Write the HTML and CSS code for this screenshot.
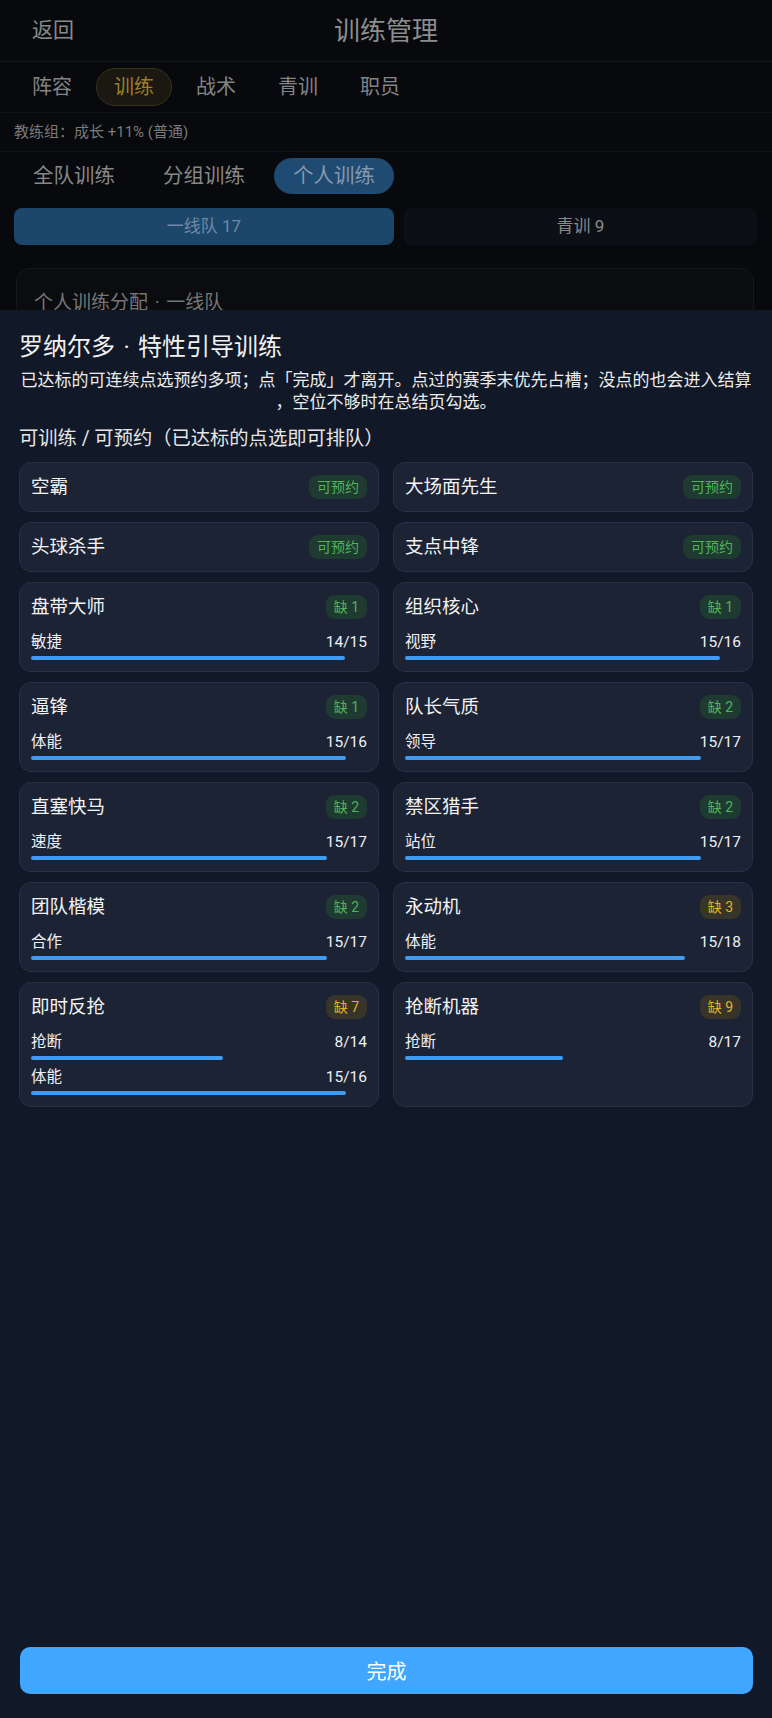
FILE: index.html
```html
<!DOCTYPE html>
<html lang="zh">
<head>
<meta charset="utf-8">
<title>训练管理</title>
<link rel="stylesheet" href="styles.css">
</head>
<body>
<div class="app">
  <header class="topbar">
    <span class="back">返回</span>
    <h1 class="title">训练管理</h1>
  </header>
  <nav class="tabs">
    <span class="tab">阵容</span>
    <span class="tab active">训练</span>
    <span class="tab">战术</span>
    <span class="tab">青训</span>
    <span class="tab">职员</span>
  </nav>
  <div class="coach">教练组：成长 +11% (普通)</div>
  <div class="modes">
    <span class="mode">全队训练</span>
    <span class="mode">分组训练</span>
    <span class="mode active">个人训练</span>
  </div>
  <div class="seg">
    <span class="seg-btn active">一线队 17</span>
    <span class="seg-btn">青训 9</span>
  </div>
  <section class="assign">
    <div class="assign-title">个人训练分配<span class="sep">·</span>一线队</div>
  </section>

  <div class="sheet">
    <h2 class="sheet-title">罗纳尔多<span class="sep">·</span>特性引导训练</h2>
    <p class="sheet-desc">已达标的可连续点选预约多项；点「完成」才离开。点过的赛季末优先占槽；没点的也会进入结算，空位不够时在总结页勾选。</p>
    <div class="section-label">可训练 / 可预约（已达标的点选即可排队）</div>
    <div class="grid">
      <div class="card"><div class="card-head"><span class="name">空霸</span><span class="badge ok">可预约</span></div></div>
      <div class="card"><div class="card-head"><span class="name">大场面先生</span><span class="badge ok">可预约</span></div></div>
      <div class="card"><div class="card-head"><span class="name">头球杀手</span><span class="badge ok">可预约</span></div></div>
      <div class="card"><div class="card-head"><span class="name">支点中锋</span><span class="badge ok">可预约</span></div></div>

      <div class="card">
        <div class="card-head"><span class="name">盘带大师</span><span class="badge ok">缺 1</span></div>
        <div class="attrs">
          <div class="attr"><div class="attr-row"><span>敏捷</span><span>14/15</span></div><div class="bar"><div class="fill" style="width:93.33%"></div></div></div>
        </div>
      </div>
      <div class="card">
        <div class="card-head"><span class="name">组织核心</span><span class="badge ok">缺 1</span></div>
        <div class="attrs">
          <div class="attr"><div class="attr-row"><span>视野</span><span>15/16</span></div><div class="bar"><div class="fill" style="width:93.75%"></div></div></div>
        </div>
      </div>

      <div class="card">
        <div class="card-head"><span class="name">逼锋</span><span class="badge ok">缺 1</span></div>
        <div class="attrs">
          <div class="attr"><div class="attr-row"><span>体能</span><span>15/16</span></div><div class="bar"><div class="fill" style="width:93.75%"></div></div></div>
        </div>
      </div>
      <div class="card">
        <div class="card-head"><span class="name">队长气质</span><span class="badge ok">缺 2</span></div>
        <div class="attrs">
          <div class="attr"><div class="attr-row"><span>领导</span><span>15/17</span></div><div class="bar"><div class="fill" style="width:88.24%"></div></div></div>
        </div>
      </div>

      <div class="card">
        <div class="card-head"><span class="name">直塞快马</span><span class="badge ok">缺 2</span></div>
        <div class="attrs">
          <div class="attr"><div class="attr-row"><span>速度</span><span>15/17</span></div><div class="bar"><div class="fill" style="width:88.24%"></div></div></div>
        </div>
      </div>
      <div class="card">
        <div class="card-head"><span class="name">禁区猎手</span><span class="badge ok">缺 2</span></div>
        <div class="attrs">
          <div class="attr"><div class="attr-row"><span>站位</span><span>15/17</span></div><div class="bar"><div class="fill" style="width:88.24%"></div></div></div>
        </div>
      </div>

      <div class="card">
        <div class="card-head"><span class="name">团队楷模</span><span class="badge ok">缺 2</span></div>
        <div class="attrs">
          <div class="attr"><div class="attr-row"><span>合作</span><span>15/17</span></div><div class="bar"><div class="fill" style="width:88.24%"></div></div></div>
        </div>
      </div>
      <div class="card">
        <div class="card-head"><span class="name">永动机</span><span class="badge warn">缺 3</span></div>
        <div class="attrs">
          <div class="attr"><div class="attr-row"><span>体能</span><span>15/18</span></div><div class="bar"><div class="fill" style="width:83.33%"></div></div></div>
        </div>
      </div>

      <div class="card">
        <div class="card-head"><span class="name">即时反抢</span><span class="badge warn">缺 7</span></div>
        <div class="attrs">
          <div class="attr"><div class="attr-row"><span>抢断</span><span>8/14</span></div><div class="bar"><div class="fill" style="width:57.14%"></div></div></div>
          <div class="attr"><div class="attr-row"><span>体能</span><span>15/16</span></div><div class="bar"><div class="fill" style="width:93.75%"></div></div></div>
        </div>
      </div>
      <div class="card">
        <div class="card-head"><span class="name">抢断机器</span><span class="badge warn">缺 9</span></div>
        <div class="attrs">
          <div class="attr"><div class="attr-row"><span>抢断</span><span>8/17</span></div><div class="bar"><div class="fill" style="width:47.06%"></div></div></div>
        </div>
      </div>
    </div>
    <button class="done">完成</button>
  </div>
</div>
</body>
</html>
```

FILE: styles.css
```css
* { box-sizing: border-box; }
html, body {
  margin: 0;
  padding: 0;
  background: #07090d;
  font-family: Roboto, "Noto Sans CJK SC", sans-serif;
}
.app {
  position: relative;
  width: 772px;
  height: 1718px;
  overflow: hidden;
  background: #07090d;
}
.topbar {
  height: 62px;
  border-bottom: 1px solid #13161c;
  display: flex;
  align-items: center;
  justify-content: center;
  position: relative;
}
.back {
  position: absolute;
  left: 32px;
  top: 14px;
  font-size: 21px;
  line-height: 32px;
  color: #8a8a8a;
}
.title {
  margin: 0;
  font-size: 26px;
  font-weight: 400;
  color: #8d8d8d;
  line-height: 34px;
}
.tabs {
  height: 51px;
  display: flex;
  align-items: center;
  gap: 6px;
  padding-left: 14px;
  border-bottom: 1px solid #101318;
}
.tab {
  padding: 0 17px;
  height: 38px;
  line-height: 36px;
  font-size: 20px;
  color: #848484;
  border: 1px solid transparent;
  border-radius: 19px;
}
.tab.active {
  background: #1a1810;
  border-color: #39331a;
  color: #9a7f28;
}
.coach {
  height: 39px;
  line-height: 39px;
  padding-left: 14px;
  font-size: 15px;
  color: #7a7a7a;
  border-bottom: 1px solid #101318;
}
.modes {
  display: flex;
  gap: 10px;
  padding: 6px 14px 0;
  height: 49px;
}
.mode {
  height: 36px;
  line-height: 36px;
  padding: 0 19px;
  font-size: 20.5px;
  color: #878787;
  border-radius: 18px;
}
.mode.active {
  background: #1f4a71;
  color: #8698ad;
}
.seg {
  display: flex;
  gap: 10px;
  padding: 7px 15px 0 14px;
}
.seg-btn {
  flex: 1 1 auto;
  height: 37px;
  line-height: 37px;
  text-align: center;
  font-size: 17px;
  color: #8a8a8a;
  background: #0c0f15;
  border-radius: 8px;
}
.seg-btn.active {
  background: #1d466b;
  color: #6f8aa5;
}
.assign {
  margin: 23px 18px 0 16px;
  height: 120px;
  background: #0a0c10;
  border: 1px solid #15181e;
  border-radius: 14px;
  padding: 20px 17px;
}
.assign-title {
  font-size: 19px;
  line-height: 28px;
  color: #767676;
}
.sep {
  padding: 0 0.35em;
}

.sheet {
  position: absolute;
  left: 0;
  right: 0;
  top: 310px;
  bottom: 0;
  background: #111827;
  padding: 20px 19px 24px;
  display: flex;
  flex-direction: column;
}
.sheet-title {
  margin: 0;
  font-size: 24px;
  font-weight: 400;
  line-height: 34px;
  color: #f2f2f2;
}
.sheet-desc {
  margin: 5px 0 0;
  font-size: 17px;
  line-height: 22px;
  text-align: center;
  line-break: anywhere;
  color: #ececec;
}
.section-label {
  margin-top: 13px;
  font-size: 19.3px;
  line-height: 26px;
  color: #e6e6e6;
}
.grid {
  margin-top: 10px;
  display: grid;
  grid-template-columns: 1fr 1fr;
  column-gap: 14px;
  row-gap: 10px;
  align-content: start;
  flex: 1;
}
.card {
  background: #1c2335;
  border: 1px solid #283044;
  border-radius: 12px;
  padding: 11px;
}
.card-head {
  display: flex;
  align-items: center;
  justify-content: space-between;
  height: 26px;
}
.name {
  font-size: 18.5px;
  color: #f3f3f3;
  line-height: 26px;
}
.badge {
  font-size: 14px;
  line-height: 24px;
  height: 24px;
  padding: 0 8px;
  border-radius: 9px;
}
.badge.ok {
  background: #1f3a30;
  color: #4fb35a;
}
.badge.warn {
  background: #37342a;
  color: #e3b224;
}
.attrs {
  margin-top: 11px;
  display: flex;
  flex-direction: column;
  gap: 6px;
}
.attr-row {
  display: flex;
  justify-content: space-between;
  font-size: 15.5px;
  line-height: 22px;
  color: #eef0f4;
}
.bar {
  margin-top: 3px;
  height: 4px;
}
.fill {
  height: 4px;
  background: #3f9cf2;
  border-radius: 2px;
}
.done {
  flex: none;
  height: 47px;
  border: 0;
  border-radius: 10px;
  background: #40a6ff;
  color: #ffffff;
  font-family: Roboto, "Noto Sans CJK SC", sans-serif;
  font-size: 20px;
  margin: 0 0 0 1px;
}
```
